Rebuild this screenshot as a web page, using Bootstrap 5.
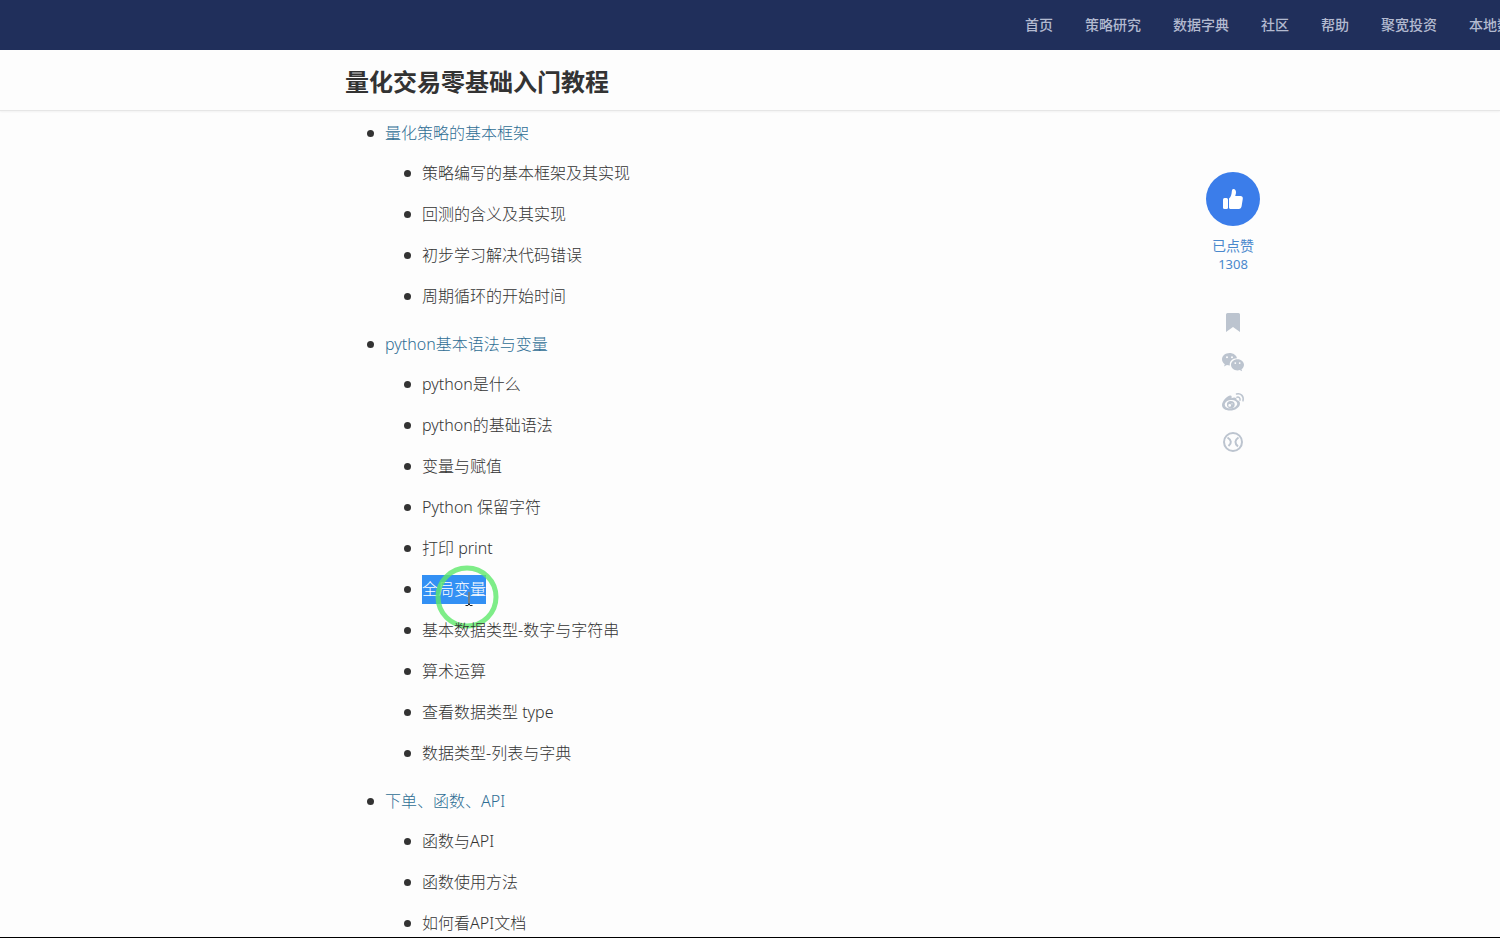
<!DOCTYPE html>
<html lang="zh-CN">
<head>
<meta charset="utf-8">
<meta name="viewport" content="width=device-width, initial-scale=1">
<title>量化交易零基础入门教程</title>
<link href="https://cdn.jsdelivr.net/npm/bootstrap@5.3.0/dist/css/bootstrap.min.css" rel="stylesheet">
<style>
  body { font-family: "Noto Sans", "Noto Sans CJK SC", sans-serif; font-size: 16px; color: #333; background: #fdfdfd; }
  .topbar { height: 50px; padding-bottom: 2px; background: #202f5b; }
  .topnav { width: 475px; gap: 32px; font-size: 14px; font-weight: 500; overflow: hidden; }
  .topnav a { color: #b3bad0; text-decoration: none; }
  .titlebar { height: 61px; padding-top: 4px; border-bottom: 1px solid #e6e6e6; box-shadow: 0 1px 2px rgba(0,0,0,.05); }
  .page-grid { display: grid; grid-template-columns: 1fr minmax(0, 810px) 1fr; }
  .page-grid h1 { font-size: 24px; line-height: 36px; }
  .page-main { border-bottom: 1px solid #000; }
  .outline, .outline ul { list-style: none; margin: 0; }
  .outline { padding: 2px 0 0 40px; font-weight: 300; }
  .outline ul { padding: 0 0 7px 37px; }
  .outline li { line-height: 41px; }
  .entry { position: relative; display: block; }
  .entry::before { content: ""; position: absolute; left: -18px; top: 17px; width: 7px; height: 7px; border-radius: 50%; background: #333; }
  .outline a { line-height: 40px; color: #2f6d94; text-decoration: none; }
  .picked { position: relative; display: inline-block; line-height: 29px; background: #3390f4; color: #fff; }
  .pointer { position: absolute; left: 13px; top: -10px; pointer-events: none; }
  .tools { padding: 61px 0 0 51px; }
  .tools-inner { width: 54px; }
  .like { width: 54px; height: 54px; background: #3b7dea; }
  .liked { margin-top: 10px; font-size: 14px; line-height: 19px; color: #4a88cc; white-space: nowrap; }
  .liked .count { font-size: 13px; }
  .share { margin-top: 36px; gap: 16px; color: #bcc4cf; }
  .share button { height: 24px; color: inherit; }
  .share svg, .like svg { display: block; }
</style>
</head>
<body class="vh-100 d-flex flex-column overflow-hidden">
<header class="topbar d-flex flex-shrink-0 justify-content-end align-items-center">
  <nav class="topnav d-flex text-nowrap" aria-label="主导航">
    <a href="#">首页</a><a href="#">策略研究</a><a href="#">数据字典</a><a href="#">社区</a><a href="#">帮助</a><a href="#">聚宽投资</a><a href="#">本地数据</a>
  </nav>
</header>
<div class="titlebar page-grid flex-shrink-0 align-items-center">
  <div></div><h1 class="fw-bold m-0">量化交易零基础入门教程</h1>
</div>
<main class="page-main page-grid flex-grow-1 overflow-hidden">
  <div></div>
  <ul class="outline">
    <li><a class="entry" href="#">量化策略的基本框架</a>
      <ul>
        <li class="entry">策略编写的基本框架及其实现</li>
        <li class="entry">回测的含义及其实现</li>
        <li class="entry">初步学习解决代码错误</li>
        <li class="entry">周期循环的开始时间</li>
      </ul>
    </li>
    <li><a class="entry" href="#">python基本语法与变量</a>
      <ul>
        <li class="entry">python是什么</li>
        <li class="entry">python的基础语法</li>
        <li class="entry">变量与赋值</li>
        <li class="entry">Python 保留字符</li>
        <li class="entry">打印 print</li>
        <li class="entry"><span class="picked">全局变量<svg class="pointer" width="64" height="64" viewBox="0 0 64 64" aria-hidden="true"><circle cx="32" cy="32" r="29" fill="none" stroke="#5ee86a" stroke-opacity=".8" stroke-width="5"/><path d="M34 27v11" stroke="#70808c" stroke-width="2"/><path d="M30.500 40.500h2.500l1-2 1 2h2.500" fill="none" stroke="#222" stroke-width="1"/></svg></span></li>
        <li class="entry">基本数据类型-数字与字符串</li>
        <li class="entry">算术运算</li>
        <li class="entry">查看数据类型 type</li>
        <li class="entry">数据类型-列表与字典</li>
      </ul>
    </li>
    <li><a class="entry" href="#">下单、函数、API</a>
      <ul>
        <li class="entry">函数与API</li>
        <li class="entry">函数使用方法</li>
        <li class="entry">如何看API文档</li>
      </ul>
    </li>
  </ul>
  <aside class="tools">
    <div class="tools-inner d-flex flex-column align-items-center text-center">
      <button class="like btn rounded-circle border-0 p-0 d-flex align-items-center justify-content-center" type="button" aria-label="点赞">
        <svg width="20" height="20" viewBox="0 0 20 20" fill="#fff"><rect y="9" width="5" height="11" rx="1.500"/><path d="M6 9.500C8 8 8.500 5.500 8.800 2.500 9 .5 9.700 0 10.500 0c1.700 0 2.500 1.600 2.500 3.300 0 1.500-.5 2.700-.8 3.700h5.300c1.600 0 2.500 1.100 2.300 2.700l-1.200 7.600c-.3 1.600-1.200 2.700-2.800 2.700H8c-1 0-2-.5-2-1.500z"/></svg>
      </button>
      <div class="liked">已点赞<div class="count">1308</div></div>
      <div class="share d-flex flex-column align-items-center">
        <button class="btn border-0 p-0" type="button" aria-label="收藏"><svg width="24" height="24" viewBox="0 0 24 24" fill="currentColor"><path d="M5 4.500Q5 3 6.500 3h11Q19 3 19 4.500V22l-7-5-7 5z"/></svg></button>
        <button class="btn border-0 p-0" type="button" aria-label="微信"><svg width="24" height="24" viewBox="0 0 24 24" fill="currentColor"><path fill-rule="evenodd" d="M8.500 3C4.400 3 1 5.800 1 9.300c0 2 1.100 3.700 2.800 4.900L3 16.500l2.900-1.400c.9.300 1.900.4 3 .4-.9-4 2.500-7.400 7.100-7.300C15.300 5.100 12.300 3 8.500 3zM6 6.200a1 1 0 110 2 1 1 0 010-2zm5 0a1 1 0 110 2 1 1 0 010-2z"/><path fill-rule="evenodd" d="M16.500 9.200c-3.600 0-6.500 2.500-6.500 5.600s2.900 5.600 6.500 5.600c.8 0 1.500-.1 2.200-.3l2.400 1.200-.6-2c1.500-1 2.500-2.700 2.500-4.500 0-3.100-2.900-5.600-6.500-5.600zm-2.200 3a.9.9 0 110 1.800.9.900 0 010-1.800zm4.400 0a.9.900 0 110 1.800.9.900 0 010-1.800z"/></svg></button>
        <button class="btn border-0 p-0" type="button" aria-label="微博"><svg width="24" height="24" viewBox="0 0 24 24" fill="currentColor"><path fill-rule="evenodd" d="M9.500 5.500c1.300.3 1.400 1.400 1 2.700 2.500-1 5.300-1 5.200 1.800 2 .5 3.500 1.700 3.300 3.700-.3 3.800-5 6.800-9.900 6.800S1 18.300 1 15c0-4 6-10 8.500-9.500zM9.600 10C6 10.400 3.500 12.600 3.800 15c.3 2.300 3.100 3.700 6.600 3.300s6.100-2.600 5.800-5C15.900 11 13.100 9.600 9.600 10z"/><path fill-rule="evenodd" d="M9.800 11a3.900 3.600 0 110 7.200 3.900 3.600 0 010-7.200zM8.700 14a1.400 1.400 0 100 2.800 1.400 1.400 0 000-2.800zm2.300-.8a.6.600 0 100 1.200.6.600 0 000-1.200z"/><path d="M15.500 4c4-1.200 7.600 2 6.500 6.800M16 7.200c2-.5 3.500.9 3 3" fill="none" stroke="currentColor" stroke-width="1.500" stroke-linecap="round"/></svg></button>
        <button class="btn border-0 p-0" type="button" aria-label="更多"><svg width="24" height="24" viewBox="0 0 24 24" fill="none" stroke="currentColor" stroke-width="2"><circle cx="12" cy="12" r="9"/><path d="M6.500 7.500C10.500 10 11 13 7.500 16M17.500 7.500c-4 2.500-4 6-.5 9"/></svg></button>
      </div>
    </div>
  </aside>
</main>
<script src="https://cdn.jsdelivr.net/npm/bootstrap@5.3.0/dist/js/bootstrap.bundle.min.js"></script>
</body>
</html>
